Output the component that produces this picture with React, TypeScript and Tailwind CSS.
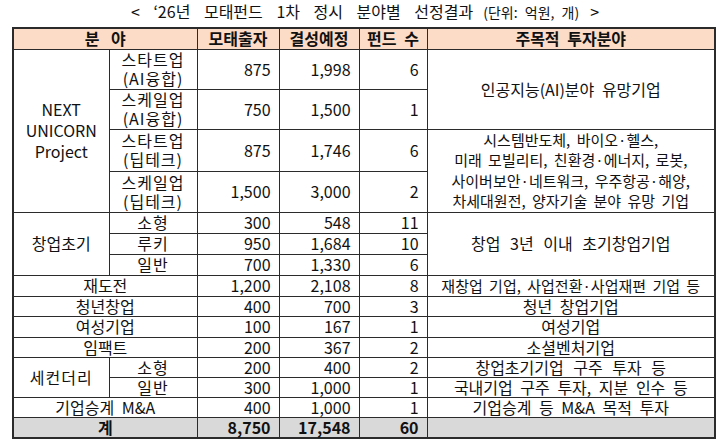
const FONT = { fontFamily: '"Noto Sans CJK KR", "Noto Sans", sans-serif' };

const td = "border border-[#2b2b2b] p-0 align-middle";
const num = `${td} text-right pr-[8px]`;
const mid = `${td} text-center`;

type Row = {
  h: string;
  cells: React.ReactNode;
};

export default function App() {
  const rows: Row[] = [
    {
      h: "h-[40px]",
      cells: (
        <>
          <td rowSpan={4} className={`${mid} leading-[21px]`}>
            NEXT
            <br />
            UNICORN
            <br />
            Project
          </td>
          <td className={`${mid} leading-[19px] tracking-[1px]`}>
            스타트업
            <br />
            (AI융합)
          </td>
          <td className={num}>875</td>
          <td className={num}>1,998</td>
          <td className={num}>6</td>
          <td rowSpan={2} className={mid}>
            인공지능(AI)분야 유망기업
          </td>
        </>
      ),
    },
    {
      h: "h-[40px]",
      cells: (
        <>
          <td className={`${mid} leading-[19px] tracking-[1px]`}>
            스케일업
            <br />
            (AI융합)
          </td>
          <td className={num}>750</td>
          <td className={num}>1,500</td>
          <td className={num}>1</td>
        </>
      ),
    },
    {
      h: "h-[41px]",
      cells: (
        <>
          <td className={`${mid} leading-[19px] tracking-[1px]`}>
            스타트업
            <br />
            (딥테크)
          </td>
          <td className={num}>875</td>
          <td className={num}>1,746</td>
          <td className={num}>6</td>
          <td
            rowSpan={2}
            className={`${mid} text-[15px] leading-[20.5px] whitespace-nowrap [word-spacing:3px]`}
          >
            시스템반도체, 바이오·헬스,
            <br />
            미래 모빌리티, 친환경·에너지, 로봇,
            <br />
            사이버보안·네트워크, 우주항공·해양,
            <br />
            차세대원전, 양자기술 분야 유망 기업
          </td>
        </>
      ),
    },
    {
      h: "h-[39px]",
      cells: (
        <>
          <td className={`${mid} leading-[19px] tracking-[1px]`}>
            스케일업
            <br />
            (딥테크)
          </td>
          <td className={num}>1,500</td>
          <td className={num}>3,000</td>
          <td className={num}>2</td>
        </>
      ),
    },
    {
      h: "h-[21px]",
      cells: (
        <>
          <td rowSpan={3} className={mid}>
            창업초기
          </td>
          <td className={`${mid} tracking-[1px]`}>소형</td>
          <td className={num}>300</td>
          <td className={num}>548</td>
          <td className={num}>11</td>
          <td rowSpan={3} className={`${mid} [word-spacing:6px]`}>
            창업 3년 이내 초기창업기업
          </td>
        </>
      ),
    },
    {
      h: "h-[21px]",
      cells: (
        <>
          <td className={`${mid} tracking-[1px]`}>루키</td>
          <td className={num}>950</td>
          <td className={num}>1,684</td>
          <td className={num}>10</td>
        </>
      ),
    },
    {
      h: "h-[21px]",
      cells: (
        <>
          <td className={`${mid} tracking-[1px]`}>일반</td>
          <td className={num}>700</td>
          <td className={num}>1,330</td>
          <td className={num}>6</td>
        </>
      ),
    },
    {
      h: "h-[21px]",
      cells: (
        <>
          <td colSpan={2} className={mid}>
            재도전
          </td>
          <td className={num}>1,200</td>
          <td className={num}>2,108</td>
          <td className={num}>8</td>
          <td className={`${mid} text-[15px] whitespace-nowrap [word-spacing:3px]`}>
            재창업 기업, 사업전환·사업재편 기업 등
          </td>
        </>
      ),
    },
    {
      h: "h-[20px]",
      cells: (
        <>
          <td colSpan={2} className={mid}>
            청년창업
          </td>
          <td className={num}>400</td>
          <td className={num}>700</td>
          <td className={num}>3</td>
          <td className={mid}>청년 창업기업</td>
        </>
      ),
    },
    {
      h: "h-[21px]",
      cells: (
        <>
          <td colSpan={2} className={mid}>
            여성기업
          </td>
          <td className={num}>100</td>
          <td className={num}>167</td>
          <td className={num}>1</td>
          <td className={mid}>여성기업</td>
        </>
      ),
    },
    {
      h: "h-[20px]",
      cells: (
        <>
          <td colSpan={2} className={mid}>
            임팩트
          </td>
          <td className={num}>200</td>
          <td className={num}>367</td>
          <td className={num}>2</td>
          <td className={mid}>소셜벤처기업</td>
        </>
      ),
    },
    {
      h: "h-[20px]",
      cells: (
        <>
          <td rowSpan={2} className={`${mid} tracking-[1px]`}>
            세컨더리
          </td>
          <td className={`${mid} tracking-[1px]`}>소형</td>
          <td className={num}>200</td>
          <td className={num}>400</td>
          <td className={num}>2</td>
          <td className={`${mid} [word-spacing:6px]`}>창업초기기업 구주 투자 등</td>
        </>
      ),
    },
    {
      h: "h-[20px]",
      cells: (
        <>
          <td className={`${mid} tracking-[1px]`}>일반</td>
          <td className={num}>300</td>
          <td className={num}>1,000</td>
          <td className={num}>1</td>
          <td className={mid}>국내기업 구주 투자, 지분 인수 등</td>
        </>
      ),
    },
    {
      h: "h-[20px]",
      cells: (
        <>
          <td colSpan={2} className={mid}>
            기업승계 M&amp;A
          </td>
          <td className={num}>400</td>
          <td className={num}>1,000</td>
          <td className={num}>1</td>
          <td className={mid}>기업승계 등 M&amp;A 목적 투자</td>
        </>
      ),
    },
  ];

  return (
    <div className="w-[720px] h-[443px] bg-white text-[#111] overflow-hidden" style={FONT}>
      <div className="h-[27px] flex items-center justify-center pb-[5px] pl-[10px] leading-none [word-spacing:10px]">
        <span className="text-[16px]">&lt; ‘26년 모태펀드 1차 정시 분야별 선정결과</span>
        <span className="text-[14px] ml-[10px] mt-[2px] [word-spacing:4px]">(단위: 억원, 개)</span>
        <span className="text-[16px] ml-[11px]">&gt;</span>
      </div>
      <div className="px-[12px]">
        <table className="table-fixed border-collapse w-[702px] text-[16px] leading-[19px] border-2 border-[#2b2b2b] [word-spacing:4px]">
          <colgroup>
            <col className="w-[96px]" />
            <col className="w-[88px]" />
            <col className="w-[82px]" />
            <col className="w-[80px]" />
            <col className="w-[68px]" />
            <col className="w-[288px]" />
          </colgroup>
          <thead>
            <tr className="h-[21px] bg-[#fcdcc6] font-bold">
              <th colSpan={2} className={`${mid} [word-spacing:8px]`}>
                분 야
              </th>
              <th className={mid}>모태출자</th>
              <th className={mid}>결성예정</th>
              <th className={mid}>펀드 수</th>
              <th className={mid}>주목적 투자분야</th>
            </tr>
          </thead>
          <tbody>
            {rows.map((r, i) => (
              <tr key={i} className={r.h}>
                {r.cells}
              </tr>
            ))}
            <tr className="h-[21px] bg-[#d9d9d9] font-bold">
              <td colSpan={2} className={mid}>
                계
              </td>
              <td className={num}>8,750</td>
              <td className={num}>17,548</td>
              <td className={num}>60</td>
              <td className={td}></td>
            </tr>
          </tbody>
        </table>
      </div>
    </div>
  );
}
